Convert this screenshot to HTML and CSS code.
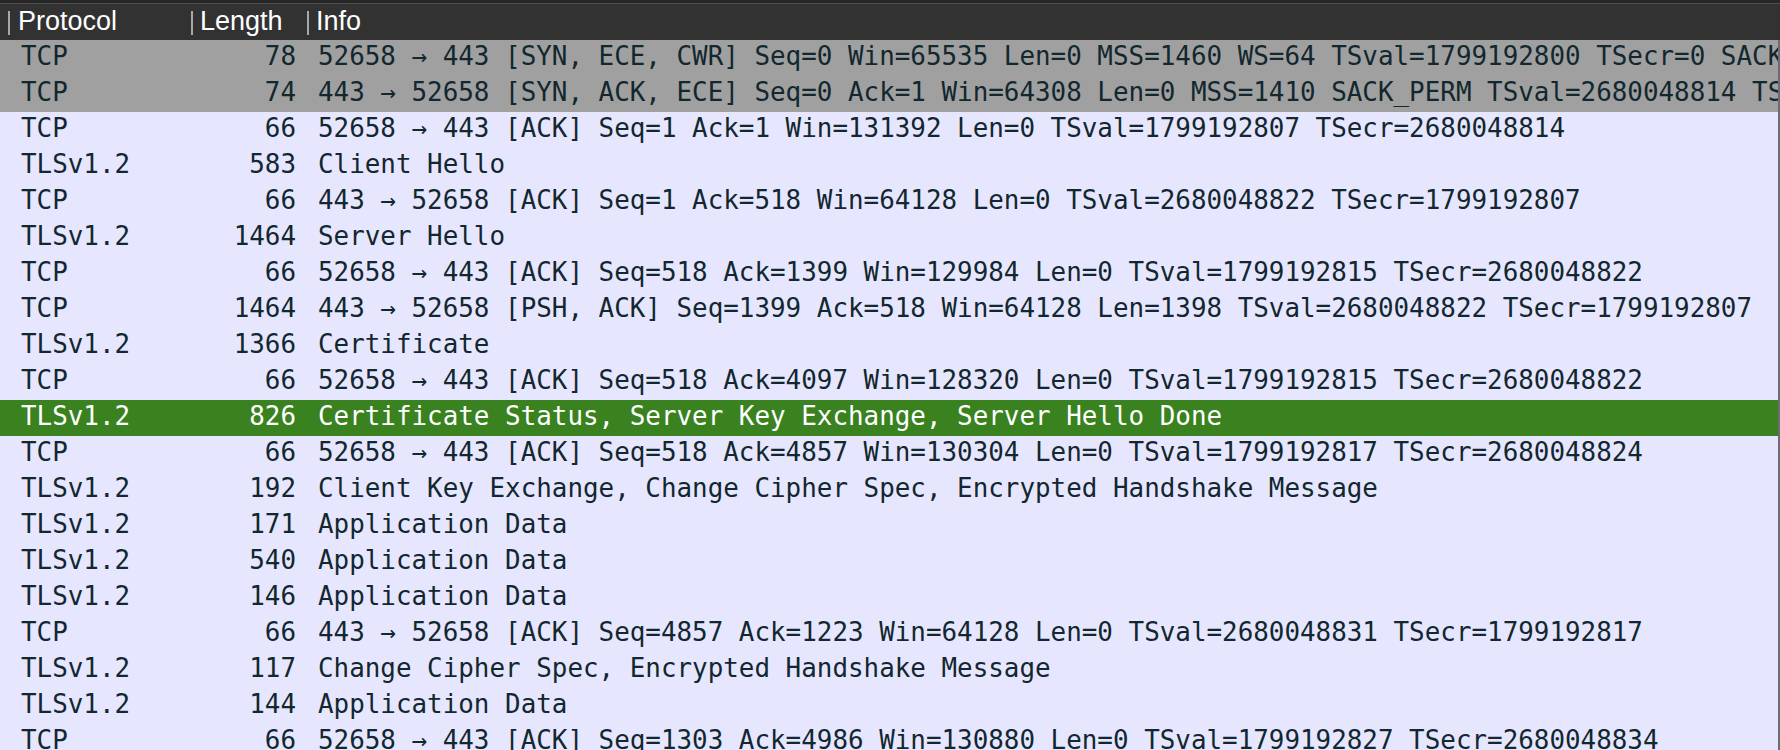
FILE: index.html
```html
<!DOCTYPE html>
<html>
<head>
<meta charset="utf-8">
<link rel="stylesheet" href="styles.css">
</head>
<body>
<div class="packet-list">
  <div class="header">
    <div class="hcell first"><span class="sep"></span><span>Protocol</span></div>
    <div class="hcell"><span class="sep"></span><span>Length</span></div>
    <div class="hcell"><span class="sep"></span><span>Info</span></div>
  </div>
  <div class="rows">
    <div class="row syn"><span class="proto">TCP</span><span class="len">78</span><span class="info">52658 → 443 [SYN, ECE, CWR] Seq=0 Win=65535 Len=0 MSS=1460 WS=64 TSval=1799192800 TSecr=0 SACK_PERM</span></div>
    <div class="row syn"><span class="proto">TCP</span><span class="len">74</span><span class="info">443 → 52658 [SYN, ACK, ECE] Seq=0 Ack=1 Win=64308 Len=0 MSS=1410 SACK_PERM TSval=2680048814 TSecr=1799192800</span></div>
    <div class="row"><span class="proto">TCP</span><span class="len">66</span><span class="info">52658 → 443 [ACK] Seq=1 Ack=1 Win=131392 Len=0 TSval=1799192807 TSecr=2680048814</span></div>
    <div class="row"><span class="proto">TLSv1.2</span><span class="len">583</span><span class="info">Client Hello</span></div>
    <div class="row"><span class="proto">TCP</span><span class="len">66</span><span class="info">443 → 52658 [ACK] Seq=1 Ack=518 Win=64128 Len=0 TSval=2680048822 TSecr=1799192807</span></div>
    <div class="row"><span class="proto">TLSv1.2</span><span class="len">1464</span><span class="info">Server Hello</span></div>
    <div class="row"><span class="proto">TCP</span><span class="len">66</span><span class="info">52658 → 443 [ACK] Seq=518 Ack=1399 Win=129984 Len=0 TSval=1799192815 TSecr=2680048822</span></div>
    <div class="row"><span class="proto">TCP</span><span class="len">1464</span><span class="info">443 → 52658 [PSH, ACK] Seq=1399 Ack=518 Win=64128 Len=1398 TSval=2680048822 TSecr=1799192807</span></div>
    <div class="row"><span class="proto">TLSv1.2</span><span class="len">1366</span><span class="info">Certificate</span></div>
    <div class="row"><span class="proto">TCP</span><span class="len">66</span><span class="info">52658 → 443 [ACK] Seq=518 Ack=4097 Win=128320 Len=0 TSval=1799192815 TSecr=2680048822</span></div>
    <div class="row selected"><span class="proto">TLSv1.2</span><span class="len">826</span><span class="info">Certificate Status, Server Key Exchange, Server Hello Done</span></div>
    <div class="row"><span class="proto">TCP</span><span class="len">66</span><span class="info">52658 → 443 [ACK] Seq=518 Ack=4857 Win=130304 Len=0 TSval=1799192817 TSecr=2680048824</span></div>
    <div class="row"><span class="proto">TLSv1.2</span><span class="len">192</span><span class="info">Client Key Exchange, Change Cipher Spec, Encrypted Handshake Message</span></div>
    <div class="row"><span class="proto">TLSv1.2</span><span class="len">171</span><span class="info">Application Data</span></div>
    <div class="row"><span class="proto">TLSv1.2</span><span class="len">540</span><span class="info">Application Data</span></div>
    <div class="row"><span class="proto">TLSv1.2</span><span class="len">146</span><span class="info">Application Data</span></div>
    <div class="row"><span class="proto">TCP</span><span class="len">66</span><span class="info">443 → 52658 [ACK] Seq=4857 Ack=1223 Win=64128 Len=0 TSval=2680048831 TSecr=1799192817</span></div>
    <div class="row"><span class="proto">TLSv1.2</span><span class="len">117</span><span class="info">Change Cipher Spec, Encrypted Handshake Message</span></div>
    <div class="row"><span class="proto">TLSv1.2</span><span class="len">144</span><span class="info">Application Data</span></div>
    <div class="row"><span class="proto">TCP</span><span class="len">66</span><span class="info">52658 → 443 [ACK] Seq=1303 Ack=4986 Win=130880 Len=0 TSval=1799192827 TSecr=2680048834</span></div>
  </div>
</div>
</body>
</html>
```
FILE: styles.css
```css
html, body {
  margin: 0;
  padding: 0;
  background: #e7e6ff;
  overflow: hidden;
}

.packet-list {
  width: 1780px;
  height: 750px;
  overflow: hidden;
  display: flex;
  flex-direction: column;
}

.header {
  height: 37px;
  flex: none;
  display: grid;
  grid-template-columns: 191px 116px 1fr;
  background: #323232;
  border-top: 3px solid #262626;
  box-shadow: inset 0 1px 0 #4d4d4d;
  font-family: "Liberation Sans", Arial, sans-serif;
  font-size: 27px;
  color: #ffffff;
}

.hcell {
  display: flex;
  align-items: center;
  gap: 7px;
}

.hcell.first {
  padding-left: 8px;
  gap: 8px;
}

.sep {
  width: 2px;
  height: 24px;
  background: #a8a8a8;
  margin-top: 3px;
}

.rows {
  flex: 1;
  width: 1778px;
  border-right: 2px solid #6c6c74;
  background: #e7e6ff;
}

.row {
  display: grid;
  grid-template-columns: 191px 116px 1fr;
  height: 36px;
  line-height: 32px;
  font-family: "DejaVu Sans Mono", "Liberation Mono", monospace;
  font-size: 25.9px;
  color: #12272e;
  background: #e7e6ff;
  white-space: pre;
  overflow: hidden;
}

.row.syn {
  background: #a0a0a0;
}

.row.selected {
  background: #39821f;
  color: #ffffff;
}

.proto {
  padding-left: 21px;
}

.len {
  text-align: right;
  padding-right: 11px;
}

.info {
  padding-left: 11px;
  overflow: hidden;
}
```
